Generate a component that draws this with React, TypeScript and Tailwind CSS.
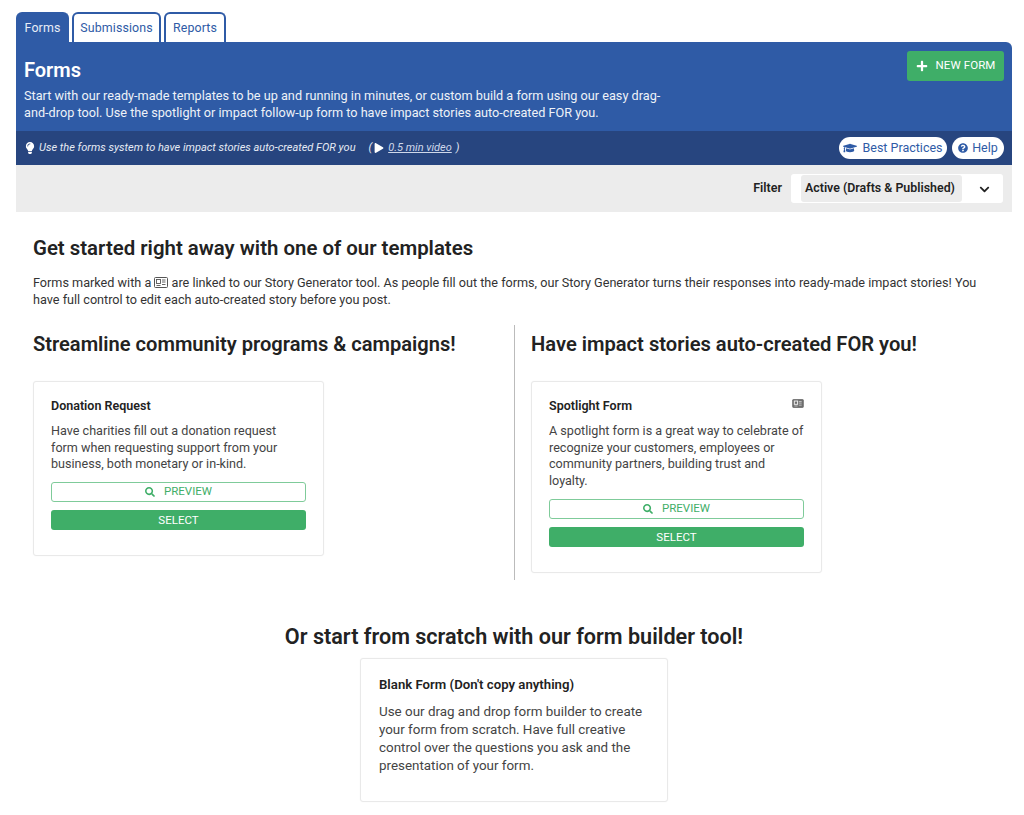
import React from "react";
import { FaPlus, FaLightbulb, FaPlay, FaGraduationCap, FaQuestionCircle, FaChevronDown, FaSearch } from "react-icons/fa";

const font = { fontFamily: 'Roboto, "Noto Sans", sans-serif' };

function StoryIcon({ className, solid }: { className: string; solid?: boolean }) {
  return (
    <svg viewBox="0 0 14 11" className={className} fill="none">
      <rect x="0.5" y="0.5" width="13" height="10" rx="1" fill={solid ? "#6f6f6f" : "none"} stroke={solid ? "#666" : "#555"} />
      <rect x="2.5" y="2.5" width="4" height="4" fill="none" stroke={solid ? "#eee" : "#555"} strokeWidth={solid ? 1.2 : 0.9} />
      <path d="M8 3h3.5M8 5h3.5M8 7.5h3.5M2.5 8.5h4" stroke={solid ? "#ddd" : "#555"} strokeWidth="0.9" />
    </svg>
  );
}

function Tab({ label, w, active }: { label: string; w: string; active?: boolean }) {
  return (
    <div className={`h-[30px] rounded-t-[6px] border-2 border-b-0 border-[#2f5ba6] flex items-center justify-center text-[12.4px] tracking-[0.12px] ${w} ${active ? "bg-[#2f5ba6] text-[#e8edf6]" : "bg-white text-[#2f5ba6]"}`}>
      {label}
    </div>
  );
}

function Card({ title, text, icon, buttons, big, className }: { title: string; text: string[]; icon?: boolean; buttons?: boolean; big?: boolean; className: string }) {
  return (
    <div className={`relative border border-[#e9e9e9] rounded-[3px] bg-white shadow-[0_0_2px_rgba(0,0,0,0.04)] ${className}`}>
      {icon && <StoryIcon solid className="absolute right-[17px] top-[17px] w-[12px] h-[9px]" />}
      <div className={`font-semibold text-[#222] leading-[17px] ${big ? "text-[13.2px]" : "text-[12.5px]"}`}>{title}</div>
      <div className={`whitespace-nowrap text-[#444] ${big ? "mt-[10px] text-[13.4px] leading-[18px]" : "mt-[9px] text-[12.6px] leading-[16.7px]"}`}>
        {text.map((t) => <div key={t}>{t}</div>)}
      </div>
      {buttons && (
        <>
          <div className="mt-[9px] h-[20px] rounded-[3px] border border-[#7fcb9a] flex items-center justify-center gap-[9px] text-[#3fae68] text-[11.5px]">
            <FaSearch className="text-[10px]" /><span>PREVIEW</span>
          </div>
          <div className="mt-[8px] h-[20px] pt-[1px] rounded-[3px] bg-[#3fae68] flex items-center justify-center text-white text-[11.5px]">SELECT</div>
        </>
      )}
    </div>
  );
}

export default function App() {
  return (
    <div style={font} className="w-[1024px] h-[815px] overflow-hidden bg-white text-[#222]">
      <div className="ml-4 w-[996px] pt-[12px]">
        <div className="flex gap-[3px]">
          <Tab label="Forms" w="w-[53px]" active />
          <Tab label="Submissions" w="w-[89px]" />
          <Tab label="Reports" w="w-[62px]" />
        </div>
        <div className="relative bg-[#2f5ba6] rounded-tr-[6px] h-[89px] px-[8px] pt-[15px] text-white">
          <div className="text-[20px] font-semibold leading-[26px]">Forms</div>
          <div className="mt-[4px] text-[12.7px] leading-[17px] text-[#eef2f8] whitespace-nowrap">
            <div>Start with our ready-made templates to be up and running in minutes, or custom build a form using our easy drag-</div>
            <div>and-drop tool. Use the spotlight or impact follow-up form to have impact stories auto-created FOR you.</div>
          </div>
          <div className="absolute right-[8px] top-[9px] w-[97px] h-[30px] rounded-[3px] bg-[#3fae68] flex items-center justify-center gap-[8px] text-[11.5px] tracking-[0.1px]">
            <FaPlus className="text-[12px]" /><span>NEW FORM</span>
          </div>
        </div>
        <div className="bg-[#27457f] h-[34px] px-[8px] flex items-center justify-between text-white">
          <div className="flex items-center text-[11px] italic text-[#e6ebf4]">
            <FaLightbulb className="text-[12px] mr-[3px] text-white" />
            <span>Use the forms system to have impact stories auto-created FOR you</span>
            <span className="ml-[13px]">(</span>
            <FaPlay className="text-[10px] ml-[2px] mr-[4px] text-white" />
            <span className="underline text-[#cfd8ea]">0.5 min video</span>
            <span className="ml-[4px]">)</span>
          </div>
          <div className="flex items-center gap-[5px] text-[12.5px] text-[#2f5ba6]">
            <div className="h-[22px] w-[108px] rounded-full bg-white flex items-center justify-center gap-[5px] whitespace-nowrap">
              <FaGraduationCap className="text-[14px]" /><span>Best Practices</span>
            </div>
            <div className="h-[22px] w-[52px] rounded-full bg-white flex items-center justify-center gap-[4px]">
              <FaQuestionCircle className="text-[10px]" /><span>Help</span>
            </div>
          </div>
        </div>
        <div className="bg-[#ececec] h-[47px] flex items-center justify-end pr-[9px]">
          <span className="text-[12.5px] font-semibold mr-[9px]">Filter</span>
          <div className="w-[212px] h-[29px] bg-white rounded-[3px] flex items-center pl-[10px] relative">
            <div className="h-[27px] w-[161px] bg-[#ececec] rounded-[3px] flex items-center pl-[4px] text-[12.4px] font-semibold whitespace-nowrap">Active (Drafts &amp; Published)</div>
            <FaChevronDown className="absolute right-[13px] top-[10px] text-[11px] text-[#222]" />
          </div>
        </div>
      </div>

      <div className="ml-[33px] w-[960px]">
        <h2 className="mt-[22px] text-[20.4px] font-semibold leading-[28px]">Get started right away with one of our templates</h2>
        <div className="mt-[12px] text-[12.65px] leading-[17px] text-[#333] whitespace-nowrap">
          <div>Forms marked with a <StoryIcon className="inline w-[14px] h-[11px] align-[-1px]" /> are linked to our Story Generator tool. As people fill out the forms, our Story Generator turns their responses into ready-made impact stories! You</div>
          <div>have full control to edit each auto-created story before you post.</div>
        </div>
        <div className="mt-[17px] flex">
          <div className="w-[482px] h-[255px] border-r border-[#bbb]">
            <h3 className="mt-[5px] text-[20.1px] font-semibold leading-[28px]">Streamline community programs &amp; campaigns!</h3>
            <Card className="mt-[23px] w-[291px] h-[175px] px-[17px] pt-[15px]" title="Donation Request" buttons
              text={["Have charities fill out a donation request", "form when requesting support from your", "business, both monetary or in-kind."]} />
          </div>
          <div className="ml-[16px]">
            <h3 className="mt-[5px] text-[20.15px] font-semibold leading-[28px]">Have impact stories auto-created FOR you!</h3>
            <Card className="mt-[23px] w-[291px] h-[192px] px-[17px] pt-[15px]" title="Spotlight Form" icon buttons
              text={["A spotlight form is a great way to celebrate of", "recognize your customers, employees or", "community partners, building trust and", "loyalty."]} />
          </div>
        </div>
      </div>

      <div className="mt-[43px] flex flex-col items-center w-[1028px]">
        <h3 className="text-[21.6px] font-semibold leading-[28px]">Or start from scratch with our form builder tool!</h3>
        <Card big className="mt-[7px] w-[308px] h-[144px] px-[18px] pt-[17px]" title="Blank Form (Don't copy anything)"
          text={["Use our drag and drop form builder to create", "your form from scratch. Have full creative", "control over the questions you ask and the", "presentation of your form."]} />
      </div>
    </div>
  );
}
